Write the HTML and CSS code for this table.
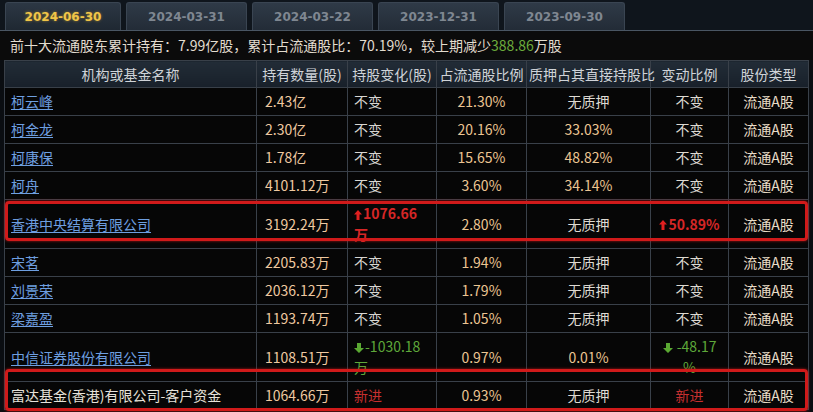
FILE: index.html
```html
<!DOCTYPE html>
<html lang="zh">
<head>
<meta charset="utf-8">
<link rel="stylesheet" href="styles.css">
</head>
<body>
<div class="page">
  <div class="tabs">
    <div class="tab active">2024-06-30</div>
    <div class="tab">2024-03-31</div>
    <div class="tab">2024-03-22</div>
    <div class="tab">2023-12-31</div>
    <div class="tab">2023-09-30</div>
  </div>
  <div class="summary">前十大流通股东累计持有：<span class="num">7.99</span>亿股，累计占流通股比：<span class="num">70.19%</span>，较上期减少<span class="green">388.86</span>万股</div>
  <div class="table-wrap">
    <table class="holders">
      <colgroup>
        <col class="c1"><col class="c2"><col class="c3"><col class="c4"><col class="c5"><col class="c6"><col class="c7">
      </colgroup>
      <thead>
        <tr>
          <th>机构或基金名称</th>
          <th>持有数量(股)</th>
          <th>持股变化(股)</th>
          <th>占流通股比例</th>
          <th>质押占其直接持股比</th>
          <th>变动比例</th>
          <th>股份类型</th>
        </tr>
      </thead>
      <tbody>
        <tr>
          <td class="name"><a>柯云峰</a></td>
          <td class="qty">2.43亿</td>
          <td class="chg">不变</td>
          <td class="pct">21.30%</td>
          <td class="ctr">无质押</td>
          <td class="ctr">不变</td>
          <td class="type">流通A股</td>
        </tr>
        <tr>
          <td class="name"><a>柯金龙</a></td>
          <td class="qty">2.30亿</td>
          <td class="chg">不变</td>
          <td class="pct">20.16%</td>
          <td class="pct">33.03%</td>
          <td class="ctr">不变</td>
          <td class="type">流通A股</td>
        </tr>
        <tr>
          <td class="name"><a>柯康保</a></td>
          <td class="qty">1.78亿</td>
          <td class="chg">不变</td>
          <td class="pct">15.65%</td>
          <td class="pct">48.82%</td>
          <td class="ctr">不变</td>
          <td class="type">流通A股</td>
        </tr>
        <tr>
          <td class="name"><a>柯舟</a></td>
          <td class="qty">4101.12万</td>
          <td class="chg">不变</td>
          <td class="pct">3.60%</td>
          <td class="pct">34.14%</td>
          <td class="ctr">不变</td>
          <td class="type">流通A股</td>
        </tr>
        <tr class="tall">
          <td class="name"><a>香港中央结算有限公司</a></td>
          <td class="qty">3192.24万</td>
          <td class="chg up"><svg class="arr" viewBox="0 0 8 10" width="8" height="10"><path d="M4 0 L8 4.5 L5.5 4.5 L5.5 10 L2.5 10 L2.5 4.5 L0 4.5 Z" fill="#e02020"/></svg>1076.66<br>万</td>
          <td class="pct">2.80%</td>
          <td class="ctr">无质押</td>
          <td class="ctr up"><svg class="arr" viewBox="0 0 8 10" width="8" height="10"><path d="M4 0 L8 4.5 L5.5 4.5 L5.5 10 L2.5 10 L2.5 4.5 L0 4.5 Z" fill="#e02020"/></svg>50.89%</td>
          <td class="type">流通A股</td>
        </tr>
        <tr>
          <td class="name"><a>宋茗</a></td>
          <td class="qty">2205.83万</td>
          <td class="chg">不变</td>
          <td class="pct">1.94%</td>
          <td class="ctr">无质押</td>
          <td class="ctr">不变</td>
          <td class="type">流通A股</td>
        </tr>
        <tr>
          <td class="name"><a>刘景荣</a></td>
          <td class="qty">2036.12万</td>
          <td class="chg">不变</td>
          <td class="pct">1.79%</td>
          <td class="ctr">无质押</td>
          <td class="ctr">不变</td>
          <td class="type">流通A股</td>
        </tr>
        <tr>
          <td class="name"><a>梁嘉盈</a></td>
          <td class="qty">1193.74万</td>
          <td class="chg">不变</td>
          <td class="pct">1.05%</td>
          <td class="ctr">无质押</td>
          <td class="ctr">不变</td>
          <td class="type">流通A股</td>
        </tr>
        <tr class="tall">
          <td class="name"><a>中信证券股份有限公司</a></td>
          <td class="qty">1108.51万</td>
          <td class="chg down"><svg class="arr" viewBox="0 0 10 10" width="10" height="10"><path d="M3 0 L7 0 L7 5 L10 5 L5 10 L0 5 L3 5 Z" fill="#5aa832"/></svg>-1030.18<br>万</td>
          <td class="pct">0.97%</td>
          <td class="pct">0.01%</td>
          <td class="ctr down"><svg class="arr" viewBox="0 0 10 10" width="10" height="10"><path d="M3 0 L7 0 L7 5 L10 5 L5 10 L0 5 L3 5 Z" fill="#5aa832"/></svg> -48.17<br>%</td>
          <td class="type">流通A股</td>
        </tr>
        <tr>
          <td class="name plain">富达基金(香港)有限公司-客户资金</td>
          <td class="qty">1064.66万</td>
          <td class="chg new">新进</td>
          <td class="pct">0.93%</td>
          <td class="ctr">无质押</td>
          <td class="ctr new">新进</td>
          <td class="type">流通A股</td>
        </tr>
      </tbody>
    </table>
    <div class="mark mark-1"></div>
    <div class="mark mark-2"></div>
  </div>
</div>
</body>
</html>
```

FILE: styles.css
```css
* { box-sizing: border-box; }
html, body {
  margin: 0;
  padding: 0;
  background: #0a0d11;
  overflow: hidden;
}
body {
  font-family: "Noto Sans CJK SC", "Noto Sans", sans-serif;
  font-size: 14px;
  color: #dcd6cc;
}
.page {
  width: 813px;
  height: 412px;
  overflow: hidden;
}
.tabs {
  display: flex;
  gap: 5px;
  height: 31px;
  padding-top: 2px;
  background: #0f151c;
  border-bottom: 1px solid #4a5663;
}
.tab {
  width: 121px;
  height: 28px;
  display: flex;
  align-items: center;
  justify-content: center;
  font-family: "DejaVu Sans", sans-serif;
  font-weight: bold;
  font-size: 12px;
  color: #7f8791;
  background: linear-gradient(#2f3a47, #232c37);
  border: 1px solid #3a4552;
  border-bottom: none;
  border-radius: 3px 3px 0 0;
}
.tab.active {
  width: 116px;
  margin-left: 5px;
  color: #f0c548;
  text-shadow: 0 0 3px rgba(240, 180, 40, 0.55);
  background: linear-gradient(#2c3744, #1f2832);
}
.summary {
  height: 29px;
  line-height: 29px;
  padding-left: 10px;
  background: #0b0b0b;
  color: #e2dccf;
  white-space: nowrap;
}
.summary .green { color: #6cab3c; }
.table-wrap {
  position: relative;
  padding-left: 4px;
}
.holders {
  border-collapse: collapse;
  table-layout: fixed;
  width: 804px;
  background: #060606;
}
.c1 { width: 252px; }
.c2 { width: 91px; }
.c3 { width: 89px; }
.c4 { width: 90px; }
.c5 { width: 124px; }
.c6 { width: 78px; }
.c7 { width: 80px; }
.holders th, .holders td {
  border: 1px solid #394049;
  vertical-align: middle;
  white-space: nowrap;
}
.holders th {
  font-weight: normal;
  color: #cfd3d8;
  line-height: 20px;
  padding: 3px 2px;
  text-align: center;
  background: linear-gradient(#222c37, #18202a);
}
.holders td {
  line-height: 21px;
  padding: 3px 6px;
}
.holders td.name { padding-left: 6px; }
.holders td.name a {
  color: #6e9fe0;
  text-decoration: underline;
  text-underline-offset: 2px;
}
.holders td.plain { color: #e6e2da; }
.qty {
  padding-left: 8px !important;
  color: #efc9a0;
}
.chg { color: #d8d6d2; padding-left: 6px !important; }
.pct, .ctr, .type { text-align: center; }
.pct { color: #ecc592; }
.ctr { color: #dedad2; }
.type { color: #e8dcc6; }
.up { color: #d62626; font-weight: bold; }
.down { color: #5ea83a; }
.new { color: #c63030; }
.chg.up, .chg.down { vertical-align: top; }
.ctr.down { vertical-align: top; }
.arr { vertical-align: -0.5px; margin-right: 1px; }
.mark {
  position: absolute;
  left: 5px;
  width: 803px;
  border: 3px solid #d01a1a;
  border-radius: 4px;
  box-shadow: 0 0 3px rgba(230, 30, 30, 0.7);
  pointer-events: none;
}
.mark-1 { top: 141px; height: 40px; }
.mark-2 { top: 309px; height: 42px; }
```
